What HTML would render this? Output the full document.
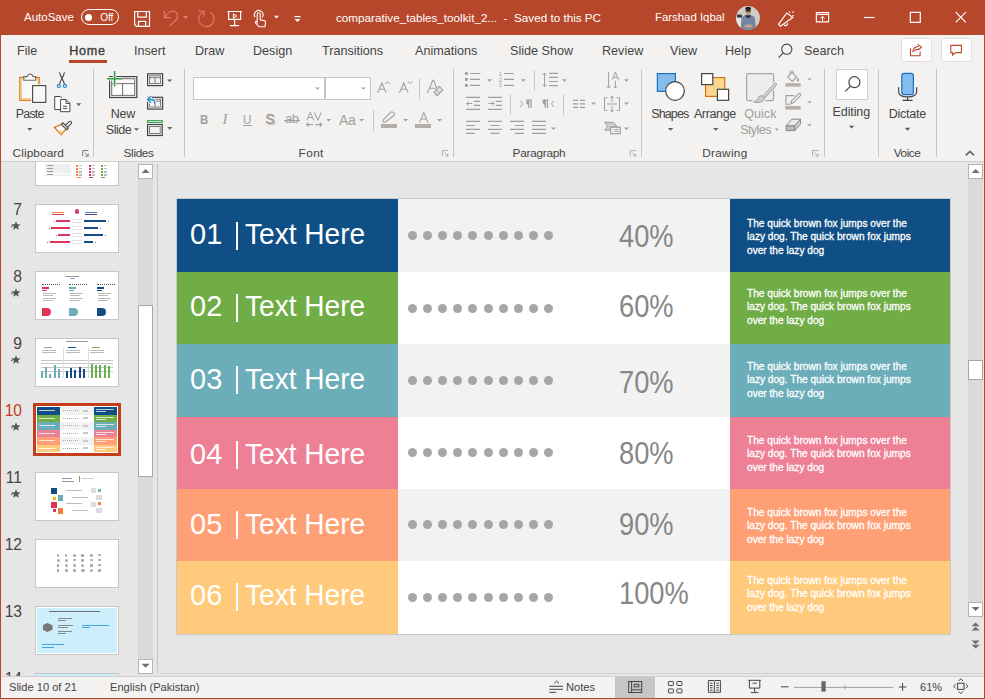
<!DOCTYPE html>
<html><head><meta charset="utf-8">
<style>
*{margin:0;padding:0;box-sizing:border-box}
html,body{width:985px;height:699px;overflow:hidden}
body{position:relative;background:#F3F2F1;font-family:"Liberation Sans",sans-serif;color:#262626}
.a{position:absolute}
.t{position:absolute;white-space:nowrap;line-height:1}
svg{position:absolute;overflow:visible}
#title{left:0;top:0;width:985px;height:35px;background:#B7472A}
.wt{color:#fff}
.tab{position:absolute;top:45px;font-size:12.6px;color:#444;line-height:1;white-space:nowrap}
.rl{position:absolute;font-size:12px;color:#444;line-height:1;white-space:nowrap}
.sep{position:absolute;width:1px;background:#C8C6C4}
.row{position:absolute;left:177px;width:773px}
.lab{position:absolute;left:0;top:0;width:221px;height:100%}
.mid{position:absolute;left:221px;top:0;width:332px;height:100%}
.desc{position:absolute;left:553px;top:0;width:220px;height:100%}
.lbl{font-size:29px;color:#fff}
.tx{transform:scaleX(0.968);transform-origin:0 0}
.pct{font-size:31px;color:#878787;transform:scaleX(0.88);transform-origin:0 0}
.dt{position:absolute;font-size:10.5px;color:#fff;line-height:13.3px;white-space:nowrap;-webkit-text-stroke:.3px #fff;transform:scaleX(0.965);transform-origin:0 0}
.dots{position:absolute;height:10px;width:150px}
.dots i{position:absolute;top:0;width:9px;height:9px;border-radius:50%;background:#A6A6A6}
.thumb{position:absolute;left:35px;width:84px;height:49px;background:#fff;border:1px solid #C8C8C8}
.tn{position:absolute;font-size:15px;color:#444;line-height:1}
.star{position:absolute;font-size:12px;color:#555;line-height:1}
</style></head><body>
<!-- TITLE BAR -->
<div id="title" class="a"></div>
<div class="t wt" style="left:24px;top:12px;font-size:11.5px">AutoSave</div>
<div class="a" style="left:81px;top:9px;width:38px;height:16px;border:1px solid #fff;border-radius:8px"></div>
<div class="a" style="left:85.4px;top:13.5px;width:7px;height:7px;border-radius:50%;background:#fff"></div>
<div class="t wt" style="left:100.2px;top:12.6px;font-size:10px">Off</div>
<div class="t wt" style="left:336px;top:12px;font-size:11.7px">comparative_tables_toolkit_2...&nbsp;&nbsp;-&nbsp;&nbsp;Saved to this PC</div>
<div class="t wt" style="left:655px;top:12px;font-size:11.4px">Farshad Iqbal</div>


<svg class="a" style="left:0;top:0" width="985" height="35" viewBox="0 0 985 35">
 <g fill="none" stroke="#fff" stroke-width="1.2">
  <!-- save -->
  <path d="M134.6 11.5h14.9v14.8h-13l-1.9-1.9z"/>
  <path d="M137.8 11.5v5.7h8.5v-5.7"/>
  <path d="M138.5 26.3v-5h7.2v5"/>
  <!-- present -->
  <path d="M227.3 11.5h14.6M228.6 11.5v7.9h12v-7.9M234.6 19.4v6.2M229.9 25.6h9.2"/>
  <path d="M233.4 13.9v4.2l3.4-2.1z" stroke-width="1"/>
  <!-- touch -->
  <path d="M257.2 22.5v-8.3a1.5 1.5 0 0 1 3 0v5.5l4 .9c1 .3 1.5 1 1.4 2l-.7 4.2h-6l-3.2-3.6c-.6-.7-.4-1.6.4-1.9z" stroke-width="1.1"/>
  <path d="M255.2 17.3a4.3 4.3 0 1 1 7 0" stroke-width="1.1"/>
  <!-- minimize/max/close -->
  <path d="M864 17.5h10.5"/>
  <path d="M910.3 12.4h10v10h-10z"/>
  <path d="M955.7 12.2l10.2 10.2M965.9 12.2l-10.2 10.2"/>
  <!-- ribbon display -->
  <path d="M816.4 12.5h12.2v9.3h-12.2zM816.4 14.3h12.2"/>
  <path d="M822.5 21.6v-5.2M820.3 18.5l2.2-2.1 2.2 2.1" stroke-width="1"/>
  <!-- megaphone -->
  <path d="M778.5 24.3l8.3-11.3 6 4.6-12.4 8.7z"/>
  <path d="M784 24.6a1.9 1.9 0 0 0 3.5-1.4"/>
  <path d="M789.6 11.2v1.7M792 13.1l1.8-1.9M792.2 15.7h1.8" stroke-width="1"/>
 </g>
 <g fill="none" stroke="#EC7560" stroke-width="1.2">
  <path d="M164.3 11.1v6.6h6.5"/>
  <path d="M165.4 16.6c2-3.6 4.8-5.4 7.6-5.4a4.7 4.7 0 0 1 4.6 5c0 1.6-.8 3-1.8 4l-6.6 6.2"/>
  <path d="M210.6 12.4a7.7 7.7 0 1 1-7.3-.6"/>
  <path d="M198 11.2h5.9v5.6"/>
 </g>
 <path d="M183 16.2h5l-2.5 2.6z" fill="#D9907E"/>
 <path d="M274 15.8h5l-2.5 2.6z" fill="#fff"/>
 <path d="M294.5 16h6v1.2h-6zM294.5 19h6l-3 3z" fill="#fff"/>
 <!-- avatar -->
 <defs><clipPath id="av"><circle cx="748" cy="18" r="11.9"/></clipPath></defs>
 <g clip-path="url(#av)">
  <rect x="735" y="5" width="26" height="26" fill="#CFCDC8"/>
  <rect x="735" y="17" width="8" height="14" fill="#E4E4E2"/>
  <rect x="737" y="14.6" width="5" height="3" fill="#3A3A3A"/>
  <path d="M740.6 31l.8-13.2c2.2-2.2 4.4-3 6.8-3s4.8.9 6.6 2.6l1.6 13.6z" fill="#7286A3"/>
  <path d="M745.2 15.3h6l-1.2 2.4h-3.6z" fill="#2E2E2E"/>
  <ellipse cx="748.2" cy="11.3" rx="2.6" ry="3.4" fill="#B58F74"/>
  <ellipse cx="748.2" cy="8.4" rx="2.9" ry="1.7" fill="#1E1E1E"/>
  <rect x="745.6" y="10.2" width="5.2" height="1.3" fill="#222"/>
  <ellipse cx="748.4" cy="26" rx="4.2" ry="1.7" fill="#BFA08A"/>
 </g>
</svg>

<!-- window border -->
<div class="a" style="left:0;top:35px;width:1px;height:664px;background:#B7472A"></div>
<div class="a" style="left:984px;top:35px;width:1px;height:664px;background:#B7472A"></div>
<div class="a" style="left:0;top:698px;width:985px;height:1px;background:#B7472A"></div>

<!-- TABS -->
<div class="tab" style="left:17px">File</div>
<div class="tab" style="left:69.3px;color:#3A3A3A;letter-spacing:.7px;-webkit-text-stroke:.35px #3A3A3A">Home</div>
<div class="a" style="left:69px;top:60px;width:38px;height:3px;background:#B7472A"></div>
<div class="tab" style="left:134px">Insert</div>
<div class="tab" style="left:195px">Draw</div>
<div class="tab" style="left:253px">Design</div>
<div class="tab" style="left:322px">Transitions</div>
<div class="tab" style="left:415px">Animations</div>
<div class="tab" style="left:510px">Slide Show</div>
<div class="tab" style="left:602px">Review</div>
<div class="tab" style="left:670px">View</div>
<div class="tab" style="left:725px">Help</div>
<div class="tab" style="left:804px">Search</div>

<!-- RIBBON -->
<!-- RIBBON LABELS -->
<div class="t" style="left:15.8px;top:107.7px;font-size:12.5px;letter-spacing:-0.84px;color:#444">Paste</div>
<div class="t" style="left:110.8px;top:108.0px;font-size:12.5px;letter-spacing:-0.21px;color:#444">New</div>
<div class="t" style="left:105.8px;top:123.5px;font-size:12.5px;letter-spacing:-0.50px;color:#444">Slide</div>
<div class="t" style="left:12.6px;top:147.5px;font-size:11.8px;letter-spacing:0.10px;color:#444">Clipboard</div>
<div class="t" style="left:123.6px;top:147.9px;font-size:11.8px;letter-spacing:-0.35px;color:#444">Slides</div>
<div class="t" style="left:298.6px;top:147.9px;font-size:11.8px;letter-spacing:0.40px;color:#444">Font</div>
<div class="t" style="left:512.5px;top:147.5px;font-size:11.8px;letter-spacing:-0.24px;color:#444">Paragraph</div>
<div class="t" style="left:702.2px;top:147.5px;font-size:11.8px;letter-spacing:0.29px;color:#444">Drawing</div>
<div class="t" style="left:893.7px;top:147.9px;font-size:11.8px;letter-spacing:-0.41px;color:#444">Voice</div>
<div class="t" style="left:651.2px;top:108.0px;font-size:12.5px;letter-spacing:-0.86px;color:#444">Shapes</div>
<div class="t" style="left:693.9px;top:108.0px;font-size:12.5px;letter-spacing:-0.36px;color:#444">Arrange</div>
<div class="t" style="left:744.2px;top:108.0px;font-size:12.5px;letter-spacing:0.06px;color:#A19F9D">Quick</div>
<div class="t" style="left:740.2px;top:123.5px;font-size:12.5px;letter-spacing:-0.57px;color:#A19F9D">Styles</div>
<div class="t" style="left:832.6px;top:106.0px;font-size:12.5px;letter-spacing:-0.12px;color:#444">Editing</div>
<div class="t" style="left:888.7px;top:108.2px;font-size:12.5px;letter-spacing:-0.22px;color:#444">Dictate</div>
<!-- font boxes -->
<div class="a" style="left:193px;top:77px;width:132px;height:23px;background:#fff;border:1px solid #C8C6C4"></div>
<div class="a" style="left:325px;top:77px;width:46px;height:23px;background:#fff;border:1px solid #C8C6C4"></div>
<!-- editing box -->
<div class="a" style="left:836px;top:69px;width:32px;height:31px;background:#fff;border:1px solid #D2D0CE"></div>
<!-- share / comment buttons -->
<div class="a" style="left:900.5px;top:38.3px;width:31px;height:23.5px;background:#fff;border:1px solid #E1DFDD;border-radius:3px"></div>
<div class="a" style="left:940.5px;top:38.3px;width:31px;height:23.5px;background:#fff;border:1px solid #E1DFDD;border-radius:3px"></div>
<svg class="a" style="left:0;top:0" width="985" height="165" viewBox="0 0 985 165">
 <!-- ===== tabs row icons ===== -->
 <g fill="none" stroke="#444" stroke-width="1.1">
  <circle cx="786.8" cy="49.2" r="5.1"/>
  <path d="M783.2 52.9l-4.6 4.7"/>
 </g>
 <g fill="none" stroke="#B7472A" stroke-width="1.1">
  <path d="M910.5 48.2v7.5h9.6v-4.3"/>
  <path d="M912.6 52.2c.6-3.6 2.8-5.8 6.2-5.8M914.2 51.3c1-1.4 2.6-2.2 4.8-2.2"/>
  <path d="M917.8 44.2l3.6 3-3 2.6"/>
  <path d="M950.8 45.4h10.6v7.2h-5.8l-3 2.4v-2.4h-1.8z"/>
 </g>
 <!-- ===== CLIPBOARD ===== -->
 <rect x="19.9" y="77.5" width="19.2" height="22.7" fill="#F5F5F5" stroke="#D9730D" stroke-width="1.3"/>
 <rect x="21.3" y="78.9" width="16.4" height="19.9" fill="#F8F8F8" stroke="#F7D08A" stroke-width="1.4"/>
 <path d="M23.8 80.2h11.8v-3.6h-2.5l-.9-1.6a2.5 2.5 0 0 0 -4.1 0l-.9 1.6h-3.4z" fill="#FAFAFA" stroke="#6A6A6A" stroke-width="1.1"/>
 <rect x="32.6" y="85.6" width="13.2" height="16.8" fill="none" stroke="#FAFAFA" stroke-width="2.6"/>
 <rect x="32.6" y="85.6" width="13.2" height="16.8" fill="#F8F8F8" stroke="#444" stroke-width="1.1"/>
 <g fill="none" stroke="#444" stroke-width="1">
  <path d="M59.5 72.3c.6 2.4 1.6 4.6 2.6 6.5s2 3.6 2.3 5.2M64.5 72.3c-.6 2.4-1.6 4.6-2.6 6.5s-2 3.6-2.3 5.2" stroke-width="1.1"/>
  <path d="M61.8 109.6h-7.1v-13.1h5.6l1.5 1.5" fill="#fff"/>
  <path d="M60.6 99.5h5.4l3.9 3.9v8.3h-9.3z" fill="#fff"/>
  <path d="M66 99.5v3.9h3.9M63 106.3h4.2M63 108.6h4.2"/>
 </g>
 <g fill="#fff" stroke="#1E8BCD" stroke-width="1.3">
  <circle cx="58.8" cy="85.9" r="1.5"/><circle cx="64.9" cy="85.9" r="1.5"/>
 </g>
 <path d="M65.2 125.7l4-4a1.3 1.3 0 0 1 1.9 1.9l-4 4z" fill="#fff" stroke="#444" stroke-width="1.1"/>
 <path d="M54.5 127.4l7.6-3.4 4.3 4.6-5.2 6z" fill="#fff" stroke="#D9730D" stroke-width="1.3"/>
 <path d="M57.6 130.6h6.4l-2.8 3.4z" fill="#FBD490"/>
 <path d="M61.4 124.4l1.5-1.5 5.3 5.3-1.5 1.5z" fill="#fff" stroke="#444" stroke-width="1.1"/>
 <g fill="#605E5C">
  <path d="M27.1 128.1h5.2l-2.6 2.7z"/>
  <path d="M76.2 103.2h5l-2.5 2.7z"/>
 </g>
 <g fill="none" stroke="#777" stroke-width="1">
  <path d="M82.7 156.2v-5.6h5.6M84.8 152.7l3.3 3.3M88.2 153.6v2.6h-2.6"/>
 </g>
 <!-- ===== SLIDES ===== -->
 <rect x="109.6" y="76.6" width="27.2" height="20.9" fill="#F4F4F4" stroke="#444" stroke-width="1.2"/>
 <rect x="111.7" y="78.7" width="23" height="16.7" fill="#FCFCFC" stroke="#707070" stroke-width="1"/>
 <path d="M111.7 83.6h23M122.6 83.6v11.8" stroke="#707070" stroke-width="1" fill="none"/>
 <path d="M114.6 71v15.2M107 78.8h15.3" stroke="#F3F2F1" stroke-width="3.4" fill="none"/>
 <path d="M114.6 71v15.2M107 78.8h15.3" stroke="#2E9E48" stroke-width="1.5" fill="none"/>
 <g fill="none" stroke="#444" stroke-width="1.2">
  <rect x="147.6" y="73.8" width="15" height="11.8"/>
  <rect x="147.6" y="97.3" width="15" height="11.8"/>
  <rect x="147.6" y="124.5" width="14.6" height="11"/>
 </g>
 <g fill="none" stroke="#707070" stroke-width="0.9">
  <rect x="149.6" y="75.8" width="11" height="7.8"/><path d="M149.6 77.7h11M155.1 77.7v5.9"/>
  <rect x="149.6" y="99.3" width="11" height="7.8"/><path d="M149.6 101.2h11M155.1 101.2v5.9"/>
  <rect x="149.6" y="126.5" width="10.6" height="7"/>
 </g>
 <path d="M148.4 99.5h2.8c2.2 0 3.6 1.6 3.6 3.6v1.2M150.8 96.3l-3.1 3.2 3.1 3.2" stroke="#F3F2F1" stroke-width="3.4" fill="none"/>
 <path d="M148.4 99.5h2.8c2.2 0 3.6 1.6 3.6 3.6v1.2M150.8 96.3l-3.1 3.2 3.1 3.2" stroke="#1E8BCD" stroke-width="1.3" fill="none"/>
 <rect x="147.5" y="120.6" width="14.8" height="1.8" fill="#E7F4EA" stroke="#2E9E48" stroke-width="1"/>
 <g fill="#605E5C">
  <path d="M134 128.2h5l-2.5 2.6z"/>
  <path d="M167.2 79.4h5l-2.5 2.6z"/>
  <path d="M167.2 127.1h5l-2.5 2.6z"/>
 </g>
 <!-- ===== FONT (disabled) ===== -->
 <g fill="#A19F9D">
  <path d="M315.2 87.4h4.6l-2.3 2.3z"/><path d="M361.1 87.4h4.6l-2.3 2.3z"/>
  <path d="M326.2 119h5l-2.5 2.4z"/><path d="M359.1 119h5l-2.5 2.4z"/>
  <path d="M403.1 119h5l-2.5 2.4z"/><path d="M437.1 119h5l-2.5 2.4z"/>
  <rect x="381" y="124" width="16" height="4" fill="#B3AFAA"/>
  <rect x="415" y="124" width="16" height="4" fill="#B3AFAA"/>
 </g>
 <g fill="none" stroke="#A19F9D" stroke-width="1.1">
  <path d="M377.6 92.9l4.3-9.9 4.3 9.9M379.3 89.2h5.2"/><path d="M385.5 84.1l2.3-2.5 2.3 2.5" stroke-width="1"/>
  <path d="M399.5 92.9l4.3-9.9 4.3 9.9M401.2 89.2h5.2"/><path d="M407.9 81.2l2.3 2.5 2.3-2.5" stroke-width="1"/>
  <path d="M427.5 92.9l5.3-12.6h.9l2.9 7.8M429.7 88.3h6.3"/>
  <path d="M434 92.3l5.3-5.9 3.5 3.5-5.8 5.8z" fill="#E4E3E2"/><path d="M436.2 89.8l3.4 3.4" stroke-width="1"/>
  <path d="M306.6 124.6h6.4M308.6 122.6l-2 2 2 2M315.4 124.6h6.4M319.8 122.6l2 2-2 2"/>
  <path d="M385.4 122.2l-2.1-.3-.1-2 7.8-7.8a1.3 1.3 0 0 1 1.9 0l1.3 1.3a1.3 1.3 0 0 1 0 1.9z"/>
  <path d="M419.6 122.6l4.2-10 4.2 10M421.1 119h5.4"/>
 </g>
 <path d="M306.8 120.3l3.5-8 3.5 8M308.1 117.5h4.4M314.5 112.3l3.4 8 3.4-8" fill="none" stroke="#A19F9D" stroke-width="1"/>
 <g fill="none" stroke="#B0AEAC" stroke-width="1">
  <path d="M442.4 156.2v-5.6h5.6M444.5 152.7l3.3 3.3M447.9 153.6v2.6h-2.6"/>
  <path d="M630.2 156.2v-5.6h5.6M632.3 152.7l3.3 3.3M635.7 153.6v2.6h-2.6"/>
  <path d="M812.6 156.2v-5.6h5.6M814.7 152.7l3.3 3.3M818.1 153.6v2.6h-2.6"/>
 </g>
 <!-- ===== PARAGRAPH (disabled) ===== -->
 <g fill="#A19F9D">
  <rect x="465" y="72.1" width="2.8" height="2.8"/><rect x="465" y="78" width="2.8" height="2.8"/><rect x="465" y="84" width="2.8" height="2.8"/>
  <path d="M487.1 79.2h4.8l-2.4 2.5z"/><path d="M520.9 79.2h4.8l-2.4 2.5z"/><path d="M562 79.2h4.8l-2.4 2.5z"/>
  <path d="M624.1 79.2h4.8l-2.4 2.5z"/><path d="M591.1 102.6h4.8l-2.4 2.5z"/><path d="M624.1 102.6h4.8l-2.4 2.5z"/>
  <path d="M551.1 127.4h4.8l-2.4 2.5z"/><path d="M624.1 127.4h4.8l-2.4 2.5z"/>
 </g>
 <g fill="none" stroke="#A19F9D" stroke-width="1.2">
  <path d="M470 73.5h10M470 79.4h10M470 85.3h10"/>
  <path d="M504 73.5h10M504 79.4h10M504 85.3h10"/>
  <path d="M549 73.3h9M549 77.4h9M549 81.5h9M549 85.6h9"/>
  <path d="M466 97.4h14M474 101.4h6M474 105.4h6M466 109.3h14"/>
  <path d="M487.8 97.4h14M495.8 101.4h6M495.8 105.4h6M487.8 109.3h14"/>
  <path d="M466 121.4h14M466 125.5h9M466 129.4h14M466 133.4h9"/>
  <path d="M488 121.4h14M490.5 125.5h9M488 129.4h14M490.5 133.4h9"/>
  <path d="M510 121.4h14M515 125.5h9M510 129.4h14M515 133.4h9"/>
  <path d="M532 121.4h14M532 125.5h14M532 129.4h14M532 133.4h14"/>
  <path d="M573 100.4h5M573 103.9h5M573 107.4h5M580 100.4h5M580 103.9h5M580 107.4h5"/>
 </g>
 <g fill="none" stroke="#A19F9D" stroke-width="1">
  <path d="M544.6 73v13.6M542.6 75l2-2 2 2M542.6 84.6l2 2 2-2"/>
  <path d="M466.6 103.5h5.6M468.6 101.5l-2 2 2 2"/>
  <path d="M488.4 103.5h5.6M492 101.5l2 2-2 2"/>
  <path d="M608.6 72v16M606.4 85.9l2.2 2.2 2.2-2.2"/>
  <path d="M612.2 79.9l3.2-7.8 3.2 7.8M613.2 77.4h4.4M615.4 80.6v7.4M613.6 86.3l1.8 1.8 1.8-1.8"/>
  <path d="M520.2 100.6l2.6 3.2-2.6 3.2"/><path d="M554 100.6l-2.6 3.2 2.6 3.2"/>
  <path d="M607.4 97.6h-2.9v12.9h2.9M616.6 97.6h2.9v12.9h-2.9"/>
  <path d="M607 104h10M612 96.2v5.8M610.3 97.9l1.7-1.7 1.7 1.7M612 106v5.8M610.3 110.1l1.7 1.7 1.7-1.7"/>
  <rect x="610.5" y="127.3" width="9.6" height="6.4" fill="#F3F2F1"/>
  <path d="M612.4 129.6h1M614.6 129.6h4M612.4 131.6h1M614.6 131.6h4"/>
 </g>
 <path d="M604.6 122.3h8.8l4.2 4.6h-7.2v3.3h-5.8l3-4z" fill="#D2D0CE" stroke="#A19F9D" stroke-width="1"/>
 <rect x="610.5" y="127.3" width="9.6" height="6.4" fill="#F3F2F1" stroke="#A19F9D" stroke-width="1"/>
 <path d="M612.4 129.6h1M614.6 129.6h4M612.4 131.6h1M614.6 131.6h4" stroke="#A19F9D" stroke-width="1"/>
 <g fill="#A19F9D">
  <path d="M528.6 100.1a2.3 2.3 0 0 0 0 4.6z"/><rect x="525.8" y="99.6" width="6" height="1.1"/><rect x="528.2" y="99.6" width="1.2" height="8.4"/><rect x="530.4" y="99.6" width="1.2" height="8.4"/>
  <path d="M545 100.1a2.3 2.3 0 0 0 0 4.6z"/><rect x="542.2" y="99.6" width="6" height="1.1"/><rect x="544.6" y="99.6" width="1.2" height="8.4"/><rect x="546.8" y="99.6" width="1.2" height="8.4"/>
 </g>
 <g font-family="Liberation Sans" font-size="5.6" fill="#A19F9D"><text x="498.8" y="75.6">1</text><text x="498.8" y="81.5">2</text><text x="498.8" y="87.4">3</text></g>
 <!-- ===== DRAWING ===== -->
 <rect x="657.4" y="73.6" width="18" height="17.8" fill="#83BEEC" stroke="#1E6FC4" stroke-width="1.2"/>
 <circle cx="675" cy="91" r="9.3" fill="#fff" stroke="#444" stroke-width="1.2"/>
 <rect x="705.6" y="77.6" width="19.2" height="18.8" fill="#FAD68E" stroke="#D9730D" stroke-width="1.2"/>
 <rect x="701.6" y="73.6" width="11.2" height="11" fill="#fff" stroke="#444" stroke-width="1.2"/>
 <rect x="717.4" y="89.3" width="11.2" height="11" fill="#fff" stroke="#444" stroke-width="1.2"/>
 <rect x="746.6" y="73.6" width="27" height="27" rx="2" fill="#EDEDED" stroke="#A8A6A4" stroke-width="1.2"/>
 <path d="M752.5 101.2h13" stroke="#F3F2F1" stroke-width="2.6" fill="none"/>
 <path d="M775.3 84.3l-10.8 12" stroke="#F3F2F1" stroke-width="5.2" fill="none" stroke-linecap="round"/>
 <path d="M775.3 84.3l-10.8 12" stroke="#A19F9D" stroke-width="3.4" fill="none" stroke-linecap="round"/>
 <path d="M775.3 84.3l-10.8 12" stroke="#E4E4E4" stroke-width="1.3" fill="none" stroke-linecap="round"/>
 <path d="M753.6 101.9c2.6-.6 4.4-2.4 5.4-5.1a3.1 3.1 0 0 1 5.4 1.8c-.6 3.6-5.4 4.8-10.8 3.3z" fill="#CFCDCB" stroke="#A19F9D" stroke-width="1"/>
 <path d="M787.6 76.8l4.4-4.5 4.7 4.7-4.4 4.5z" fill="#F3F2F1" stroke="#A19F9D" stroke-width="1.1"/>
 <path d="M789.9 74.3c-.2-2 .6-3.6 1.8-3.6 1.1 0 1.8 1 1.8 2.4" fill="none" stroke="#A19F9D" stroke-width="1"/>
 <path d="M797.8 77.6c.8 1.2 1.3 2.1 1.3 2.9a1.1 1.1 0 0 1-2.2 0c0-.8.3-1.6.9-2.9z" fill="#A19F9D"/>
 <path d="M794.2 95.6h-8.3v8.6h4" fill="none" stroke="#A19F9D" stroke-width="1.1"/>
 <path d="M790.8 103.8l.8-3.1 6.9-6.9a1.3 1.3 0 0 1 1.9 1.9l-6.9 6.9z" fill="#F3F2F1" stroke="#A19F9D" stroke-width="1.1"/>
 <rect x="785.3" y="83.2" width="15.4" height="3.4" fill="#B3AFAA"/>
 <rect x="785.3" y="106" width="15.4" height="3.6" fill="#B3AFAA"/>
 <path d="M786.1 125.9l5.6-6.7h8.8l-5.6 6.7z" fill="#EAEAEA" stroke="#8A8886" stroke-width="1"/>
 <path d="M786.1 125.9h8.8v4.7h-8.8z" fill="#BDBBB9" stroke="#8A8886" stroke-width="1"/>
 <path d="M794.9 125.9l5.6-6.7v4.7l-5.6 6.7z" fill="#D6D4D2" stroke="#8A8886" stroke-width="1"/>
 <g fill="#A19F9D">
  <path d="M807.2 78.6h4.6l-2.3 2z"/><path d="M807.2 101.3h4.6l-2.3 2z"/><path d="M807.2 124.2h4.6l-2.3 2z"/>
  <path d="M774.8 128.6h4l-2 2.1z"/>
 </g>
 <g fill="#605E5C">
  <path d="M667.8 127.9h5.5l-2.75 2.9z"/><path d="M713 127.9h5.5l-2.75 2.9z"/>
  <path d="M848.8 125.7h5.5l-2.75 2.9z"/><path d="M904.8 127.8h5.5l-2.75 2.9z"/>
 </g>
 <!-- ===== EDITING / DICTATE ===== -->
 <g fill="none" stroke="#444" stroke-width="1.2">
  <circle cx="854.4" cy="82.2" r="5.5"/><path d="M850.6 86.1l-5.4 5.3"/>
  <path d="M898.6 87.2v4.2c0 3 2.8 5.4 9 5.4s9-2.4 9-5.4v-4.2M907.6 96.8v3.4M902.6 100.4h10"/>
  <path d="M965.8 155.4l4.1-4 4.1 4" stroke="#666" stroke-width="1.8"/>
 </g>
 <rect x="901.8" y="73.4" width="11.6" height="21.2" rx="2.6" fill="#83BEEC" stroke="#1E6FC4" stroke-width="1.2"/>
</svg>
<!-- B I U S ab Aa -->
<div class="t" style="left:200px;top:112.5px;font-size:13px;font-weight:bold;color:#A19F9D;transform:scaleX(.88);transform-origin:0 0">B</div>
<div class="t" style="left:222.6px;top:111.6px;font-size:14.8px;font-style:italic;font-family:'Liberation Serif';color:#A19F9D">I</div>
<div class="t" style="left:243px;top:112.5px;font-size:13px;color:#A19F9D;transform:scaleX(.9);transform-origin:0 0">U</div>
<div class="a" style="left:243px;top:125px;width:9px;height:1px;background:#A19F9D"></div>
<div class="t" style="left:266.4px;top:113.4px;font-size:14px;color:#CFCDCB;-webkit-text-stroke:.4px #CFCDCB">S</div>
<div class="t" style="left:265.2px;top:112px;font-size:14px;color:#A19F9D;-webkit-text-stroke:.4px #A19F9D">S</div>
<div class="t" style="left:285px;top:112.3px;font-size:13px;color:#A19F9D;letter-spacing:-.5px">ab</div>
<div class="a" style="left:284px;top:119.5px;width:16px;height:1px;background:#A19F9D"></div>
<div class="t" style="left:339px;top:112.6px;font-size:14px;color:#A19F9D;letter-spacing:-.3px">Aa</div>
<div class="sep" style="left:419px;top:78px;height:21px"></div>
<div class="sep" style="left:373px;top:110px;height:21px"></div>
<div class="sep" style="left:534px;top:70px;height:21px"></div>
<div class="sep" style="left:510px;top:94px;height:21px"></div>
<div class="sep" style="left:563px;top:94px;height:21px"></div>

<!-- separators -->
<div class="sep" style="left:93px;top:69px;height:88px"></div>
<div class="sep" style="left:184px;top:69px;height:88px"></div>
<div class="sep" style="left:453px;top:69px;height:88px"></div>
<div class="sep" style="left:641px;top:69px;height:88px"></div>
<div class="sep" style="left:824px;top:69px;height:88px"></div>
<div class="sep" style="left:878px;top:69px;height:88px"></div>
<div class="sep" style="left:936px;top:69px;height:88px"></div>

<div class="a" style="left:1px;top:161px;width:983px;height:1px;background:#D2D0CE"></div>

<!-- MAIN AREAS -->
<div class="a" style="left:1px;top:162px;width:983px;height:514px;background:#E6E6E6"></div>
<div class="a" style="left:1px;top:676px;width:983px;height:1px;background:#D2D0CE"></div>

<!-- PANEL -->
<div class="a" style="left:0;top:162px;width:985px;height:514px;overflow:hidden"><div class="a" style="left:0;top:-162px;width:985px;height:699px"><div class="a" style="left:138px;top:164px;width:15px;height:510px;background:#DADADA"></div>
<div class="a" style="left:138px;top:164px;width:15px;height:15px;background:#fff;border:1px solid #B4B4B4"></div>
<div class="a" style="left:138px;top:305px;width:15px;height:172px;background:#fff;border:1px solid #A8A8A8"></div>
<div class="a" style="left:138px;top:659px;width:15px;height:15px;background:#fff;border:1px solid #B4B4B4"></div>
<div class="a" style="left:157px;top:164px;width:1px;height:510px;background:#C8C6C4"></div>
<div class="a" style="left:968px;top:164px;width:15px;height:438px;background:#DADADA"></div>
<div class="a" style="left:968px;top:164px;width:15px;height:15px;background:#fff;border:1px solid #B4B4B4"></div>
<div class="a" style="left:968px;top:360px;width:15px;height:20px;background:#fff;border:1px solid #A6A6A6"></div>
<div class="a" style="left:968px;top:602px;width:15px;height:15px;background:#fff;border:1px solid #B4B4B4"></div>
<div class="a" style="left:160px;top:673px;width:824px;height:1px;background:#D0D0D0"></div>
<div class="a" style="left:35px;top:137px;width:84px;height:49px;background:#fff;border:1px solid #C6C6C6"></div>
<div class="a" style="left:35px;top:204px;width:84px;height:49px;background:#fff;border:1px solid #C6C6C6"></div>
<div class="t" style="right:963px;top:202px;font-size:15.6px;color:#444">7</div>
<div class="a" style="left:0;top:0"><svg class="a" style="left:0;top:0" width="40" height="244"><path d="M16 221.2l1.25 3.1 3.35.2-2.6 2.1.85 3.25L16 228.1l-2.85 1.75.85-3.25-2.6-2.1 3.35-.2z" fill="#555"/><path d="M11 226.6h1.6M11.6 225h1" stroke="#555" stroke-width="1"/></svg></div>
<div class="a" style="left:35px;top:271px;width:84px;height:49px;background:#fff;border:1px solid #C6C6C6"></div>
<div class="t" style="right:963px;top:269px;font-size:15.6px;color:#444">8</div>
<div class="a" style="left:0;top:0"><svg class="a" style="left:0;top:0" width="40" height="311"><path d="M16 288.2l1.25 3.1 3.35.2-2.6 2.1.85 3.25L16 295.1l-2.85 1.75.85-3.25-2.6-2.1 3.35-.2z" fill="#555"/><path d="M11 293.6h1.6M11.6 292h1" stroke="#555" stroke-width="1"/></svg></div>
<div class="a" style="left:35px;top:338px;width:84px;height:49px;background:#fff;border:1px solid #C6C6C6"></div>
<div class="t" style="right:963px;top:336px;font-size:15.6px;color:#444">9</div>
<div class="a" style="left:0;top:0"><svg class="a" style="left:0;top:0" width="40" height="378"><path d="M16 355.2l1.25 3.1 3.35.2-2.6 2.1.85 3.25L16 362.1l-2.85 1.75.85-3.25-2.6-2.1 3.35-.2z" fill="#555"/><path d="M11 360.6h1.6M11.6 359h1" stroke="#555" stroke-width="1"/></svg></div>
<div class="a" style="left:35px;top:472px;width:84px;height:49px;background:#fff;border:1px solid #C6C6C6"></div>
<div class="t" style="right:963px;top:470px;font-size:15.6px;color:#444">11</div>
<div class="a" style="left:0;top:0"><svg class="a" style="left:0;top:0" width="40" height="512"><path d="M16 489.2l1.25 3.1 3.35.2-2.6 2.1.85 3.25L16 496.1l-2.85 1.75.85-3.25-2.6-2.1 3.35-.2z" fill="#555"/><path d="M11 494.6h1.6M11.6 493h1" stroke="#555" stroke-width="1"/></svg></div>
<div class="a" style="left:35px;top:539px;width:84px;height:49px;background:#fff;border:1px solid #C6C6C6"></div>
<div class="t" style="right:963px;top:537px;font-size:15.6px;color:#444">12</div>
<div class="a" style="left:35px;top:606px;width:84px;height:49px;background:#CDEFFB;border:1px solid #C6C6C6"></div>
<div class="t" style="right:963px;top:604px;font-size:15.6px;color:#444">13</div>
<div class="a" style="left:35px;top:673px;width:84px;height:49px;background:#CDEFFB;border:1px solid #C6C6C6"></div>
<div class="t" style="right:963px;top:671px;font-size:15.6px;color:#444">14</div>
<div class="a" style="left:33px;top:403px;width:88px;height:53px;border:3px solid #C43E1C;background:#fff"></div>
<div class="t" style="right:963px;top:403px;font-size:15.6px;color:#C43E1C">10</div>
<div class="a" style="left:0;top:0"><svg class="a" style="left:0;top:0" width="40" height="460"><path d="M16 422.2l1.25 3.1 3.35.2-2.6 2.1.85 3.25L16 429.1l-2.85 1.75.85-3.25-2.6-2.1 3.35-.2z" fill="#555"/><path d="M11 427.6h1.6M11.6 426h1" stroke="#555" stroke-width="1"/></svg></div>
<div class="a" style="left:37px;top:407.00px;width:23px;height:7.80px;background:#104F85"></div>
<div class="a" style="left:60px;top:407.00px;width:34px;height:7.80px;background:#F2F2F2"></div>
<div class="a" style="left:94px;top:407.00px;width:23px;height:7.80px;background:#104F85"></div>
<div class="a" style="left:39px;top:410.00px;width:16px;height:1.2px;background:rgba(255,255,255,.75)"></div>
<div class="a" style="left:63px;top:410.20px;width:15px;height:1px;border-top:1px dotted #AAA"></div>
<div class="a" style="left:83px;top:409.60px;width:5px;height:2px;background:#C8C8C8"></div>
<div class="a" style="left:96px;top:409.20px;width:18px;height:1px;background:rgba(255,255,255,.7)"></div>
<div class="a" style="left:96px;top:411.40px;width:10px;height:1px;background:rgba(255,255,255,.7)"></div>
<div class="a" style="left:37px;top:414.50px;width:23px;height:7.80px;background:#70AD47"></div>
<div class="a" style="left:60px;top:414.50px;width:34px;height:7.80px;background:#fff"></div>
<div class="a" style="left:94px;top:414.50px;width:23px;height:7.80px;background:#70AD47"></div>
<div class="a" style="left:39px;top:417.50px;width:16px;height:1.2px;background:rgba(255,255,255,.75)"></div>
<div class="a" style="left:63px;top:417.70px;width:15px;height:1px;border-top:1px dotted #AAA"></div>
<div class="a" style="left:83px;top:417.10px;width:5px;height:2px;background:#C8C8C8"></div>
<div class="a" style="left:96px;top:416.70px;width:18px;height:1px;background:rgba(255,255,255,.7)"></div>
<div class="a" style="left:96px;top:418.90px;width:10px;height:1px;background:rgba(255,255,255,.7)"></div>
<div class="a" style="left:37px;top:422.00px;width:23px;height:7.80px;background:#6BADB9"></div>
<div class="a" style="left:60px;top:422.00px;width:34px;height:7.80px;background:#F2F2F2"></div>
<div class="a" style="left:94px;top:422.00px;width:23px;height:7.80px;background:#6BADB9"></div>
<div class="a" style="left:39px;top:425.00px;width:16px;height:1.2px;background:rgba(255,255,255,.75)"></div>
<div class="a" style="left:63px;top:425.20px;width:15px;height:1px;border-top:1px dotted #AAA"></div>
<div class="a" style="left:83px;top:424.60px;width:5px;height:2px;background:#C8C8C8"></div>
<div class="a" style="left:96px;top:424.20px;width:18px;height:1px;background:rgba(255,255,255,.7)"></div>
<div class="a" style="left:96px;top:426.40px;width:10px;height:1px;background:rgba(255,255,255,.7)"></div>
<div class="a" style="left:37px;top:429.50px;width:23px;height:7.80px;background:#EE8096"></div>
<div class="a" style="left:60px;top:429.50px;width:34px;height:7.80px;background:#fff"></div>
<div class="a" style="left:94px;top:429.50px;width:23px;height:7.80px;background:#EE8096"></div>
<div class="a" style="left:39px;top:432.50px;width:16px;height:1.2px;background:rgba(255,255,255,.75)"></div>
<div class="a" style="left:63px;top:432.70px;width:15px;height:1px;border-top:1px dotted #AAA"></div>
<div class="a" style="left:83px;top:432.10px;width:5px;height:2px;background:#C8C8C8"></div>
<div class="a" style="left:96px;top:431.70px;width:18px;height:1px;background:rgba(255,255,255,.7)"></div>
<div class="a" style="left:96px;top:433.90px;width:10px;height:1px;background:rgba(255,255,255,.7)"></div>
<div class="a" style="left:37px;top:437.00px;width:23px;height:7.80px;background:#FF9F76"></div>
<div class="a" style="left:60px;top:437.00px;width:34px;height:7.80px;background:#F2F2F2"></div>
<div class="a" style="left:94px;top:437.00px;width:23px;height:7.80px;background:#FF9F76"></div>
<div class="a" style="left:39px;top:440.00px;width:16px;height:1.2px;background:rgba(255,255,255,.75)"></div>
<div class="a" style="left:63px;top:440.20px;width:15px;height:1px;border-top:1px dotted #AAA"></div>
<div class="a" style="left:83px;top:439.60px;width:5px;height:2px;background:#C8C8C8"></div>
<div class="a" style="left:96px;top:439.20px;width:18px;height:1px;background:rgba(255,255,255,.7)"></div>
<div class="a" style="left:96px;top:441.40px;width:10px;height:1px;background:rgba(255,255,255,.7)"></div>
<div class="a" style="left:37px;top:444.50px;width:23px;height:7.80px;background:#FFCA7B"></div>
<div class="a" style="left:60px;top:444.50px;width:34px;height:7.80px;background:#fff"></div>
<div class="a" style="left:94px;top:444.50px;width:23px;height:7.80px;background:#FFCA7B"></div>
<div class="a" style="left:39px;top:447.50px;width:16px;height:1.2px;background:rgba(255,255,255,.75)"></div>
<div class="a" style="left:63px;top:447.70px;width:15px;height:1px;border-top:1px dotted #AAA"></div>
<div class="a" style="left:83px;top:447.10px;width:5px;height:2px;background:#C8C8C8"></div>
<div class="a" style="left:96px;top:446.70px;width:18px;height:1px;background:rgba(255,255,255,.7)"></div>
<div class="a" style="left:96px;top:448.90px;width:10px;height:1px;background:rgba(255,255,255,.7)"></div>
<div class="a" style="left:45px;top:164.0px;width:26px;height:2.6px;background:#EFEFEF"></div>
<div class="a" style="left:47px;top:164.8px;width:6px;height:1px;background:#999"></div>
<div class="a" style="left:76px;top:164.5px;width:2px;height:2px;background:#F47B3B"></div>
<div class="a" style="left:79px;top:164.6px;width:3px;height:1.5px;background:#BBB"></div>
<div class="a" style="left:89px;top:164.5px;width:2px;height:2px;background:#E0335A"></div>
<div class="a" style="left:92px;top:164.6px;width:3px;height:1.5px;background:#BBB"></div>
<div class="a" style="left:101px;top:164.5px;width:2px;height:2px;background:#6AB04C"></div>
<div class="a" style="left:104px;top:164.6px;width:3px;height:1.5px;background:#BBB"></div>
<div class="a" style="left:45px;top:167.2px;width:26px;height:2.6px;background:#EFEFEF"></div>
<div class="a" style="left:47px;top:168.0px;width:6px;height:1px;background:#999"></div>
<div class="a" style="left:76px;top:167.7px;width:2px;height:2px;background:#F47B3B"></div>
<div class="a" style="left:79px;top:167.8px;width:3px;height:1.5px;background:#BBB"></div>
<div class="a" style="left:89px;top:167.7px;width:2px;height:2px;background:#E0335A"></div>
<div class="a" style="left:92px;top:167.8px;width:3px;height:1.5px;background:#BBB"></div>
<div class="a" style="left:101px;top:167.7px;width:2px;height:2px;background:#6AB04C"></div>
<div class="a" style="left:104px;top:167.8px;width:3px;height:1.5px;background:#BBB"></div>
<div class="a" style="left:45px;top:170.4px;width:26px;height:2.6px;background:#EFEFEF"></div>
<div class="a" style="left:47px;top:171.2px;width:6px;height:1px;background:#999"></div>
<div class="a" style="left:76px;top:170.9px;width:2px;height:2px;background:#F47B3B"></div>
<div class="a" style="left:79px;top:171.0px;width:3px;height:1.5px;background:#BBB"></div>
<div class="a" style="left:89px;top:170.9px;width:2px;height:2px;background:#E0335A"></div>
<div class="a" style="left:92px;top:171.0px;width:3px;height:1.5px;background:#BBB"></div>
<div class="a" style="left:101px;top:170.9px;width:2px;height:2px;background:#6AB04C"></div>
<div class="a" style="left:104px;top:171.0px;width:3px;height:1.5px;background:#BBB"></div>
<div class="a" style="left:45px;top:173.6px;width:26px;height:2.6px;background:#EFEFEF"></div>
<div class="a" style="left:47px;top:174.4px;width:6px;height:1px;background:#999"></div>
<div class="a" style="left:76px;top:174.1px;width:2px;height:2px;background:#F47B3B"></div>
<div class="a" style="left:79px;top:174.2px;width:3px;height:1.5px;background:#BBB"></div>
<div class="a" style="left:89px;top:174.1px;width:2px;height:2px;background:#E0335A"></div>
<div class="a" style="left:92px;top:174.2px;width:3px;height:1.5px;background:#BBB"></div>
<div class="a" style="left:101px;top:174.1px;width:2px;height:2px;background:#6AB04C"></div>
<div class="a" style="left:104px;top:174.2px;width:3px;height:1.5px;background:#BBB"></div>
<div class="a" style="left:77px;top:177px;width:4px;height:1.2px;background:#F47B3B"></div>
<div class="a" style="left:89px;top:177px;width:4px;height:1.2px;background:#E0335A"></div>
<div class="a" style="left:101px;top:177px;width:4px;height:1.2px;background:#6AB04C"></div>
<div class="a" style="left:52px;top:212px;width:12px;height:1px;background:#F47B3B"></div>
<div class="a" style="left:52px;top:213.5px;width:12px;height:.8px;background:#C43E5C"></div>
<div class="a" style="left:74.5px;top:209px;width:4.5px;height:4.5px;border-radius:50%;background:#E0335A"></div>
<div class="a" style="left:85px;top:212px;width:12px;height:1px;background:#4F74B8"></div>
<div class="a" style="left:85px;top:213.5px;width:12px;height:.8px;background:#5A3E8C"></div>
<div class="a" style="left:56.0px;top:220.2px;width:13.7px;height:2.2px;background:#E0335A"></div>
<div class="a" style="left:84.2px;top:220.2px;width:21.8px;height:2.2px;background:#124C86"></div>
<div class="a" style="left:72px;top:219.0px;width:10px;height:3.6px;border-top:.6px solid #E2E2E2;border-bottom:.6px solid #E2E2E2"></div>
<div class="a" style="left:53.8px;top:220.6px;width:1.2px;height:1.4px;background:#777"></div>
<div class="a" style="left:108.3px;top:220.6px;width:1.2px;height:1.4px;background:#777"></div>
<div class="a" style="left:50.9px;top:227.2px;width:18.8px;height:2.2px;background:#E0335A"></div>
<div class="a" style="left:84.2px;top:227.2px;width:13.8px;height:2.2px;background:#124C86"></div>
<div class="a" style="left:72px;top:226.0px;width:10px;height:3.6px;border-top:.6px solid #E2E2E2;border-bottom:.6px solid #E2E2E2"></div>
<div class="a" style="left:48.7px;top:227.6px;width:1.2px;height:1.4px;background:#777"></div>
<div class="a" style="left:100.3px;top:227.6px;width:1.2px;height:1.4px;background:#777"></div>
<div class="a" style="left:58.0px;top:234.2px;width:11.7px;height:2.2px;background:#E0335A"></div>
<div class="a" style="left:84.2px;top:234.2px;width:18.5px;height:2.2px;background:#124C86"></div>
<div class="a" style="left:72px;top:233.0px;width:10px;height:3.6px;border-top:.6px solid #E2E2E2;border-bottom:.6px solid #E2E2E2"></div>
<div class="a" style="left:55.8px;top:234.6px;width:1.2px;height:1.4px;background:#777"></div>
<div class="a" style="left:105.0px;top:234.6px;width:1.2px;height:1.4px;background:#777"></div>
<div class="a" style="left:49.5px;top:241.2px;width:20.2px;height:2.2px;background:#E0335A"></div>
<div class="a" style="left:84.2px;top:241.2px;width:8.8px;height:2.2px;background:#124C86"></div>
<div class="a" style="left:72px;top:240.0px;width:10px;height:3.6px;border-top:.6px solid #E2E2E2;border-bottom:.6px solid #E2E2E2"></div>
<div class="a" style="left:47.3px;top:241.6px;width:1.2px;height:1.4px;background:#777"></div>
<div class="a" style="left:95.3px;top:241.6px;width:1.2px;height:1.4px;background:#777"></div>
<div class="a" style="left:65px;top:276px;width:14px;height:1px;background:#999"></div>
<div class="a" style="left:70px;top:278.3px;width:5px;height:.8px;background:#7DB0DA"></div>
<div class="a" style="left:42px;top:283.5px;width:18px;height:1.2px;border-bottom:1px dotted #555"></div>
<div class="a" style="left:42px;top:287px;width:7px;height:1.6px;background:#E0335A"></div>
<div class="a" style="left:42px;top:290px;width:5px;height:.8px;background:#E0335A"></div>
<div class="a" style="left:43px;top:292.5px;width:13px;height:.8px;background:#BBB"></div>
<div class="a" style="left:43px;top:295.0px;width:10px;height:.8px;background:#BBB"></div>
<div class="a" style="left:43px;top:297.5px;width:13px;height:.8px;background:#BBB"></div>
<div class="a" style="left:43px;top:300.0px;width:10px;height:.8px;background:#BBB"></div>
<div class="a" style="left:42px;top:307.5px;width:9px;height:8.5px;border-radius:0 5px 5px 0;background:#E0335A"></div>
<div class="a" style="left:69px;top:283.5px;width:18px;height:1.2px;border-bottom:1px dotted #555"></div>
<div class="a" style="left:69px;top:287px;width:7px;height:1.6px;background:#6BADB9"></div>
<div class="a" style="left:69px;top:290px;width:5px;height:.8px;background:#6BADB9"></div>
<div class="a" style="left:70px;top:292.5px;width:13px;height:.8px;background:#BBB"></div>
<div class="a" style="left:70px;top:295.0px;width:10px;height:.8px;background:#BBB"></div>
<div class="a" style="left:70px;top:297.5px;width:13px;height:.8px;background:#BBB"></div>
<div class="a" style="left:70px;top:300.0px;width:10px;height:.8px;background:#BBB"></div>
<div class="a" style="left:69px;top:307.5px;width:9px;height:8.5px;border-radius:0 5px 5px 0;background:#6BADB9"></div>
<div class="a" style="left:97px;top:283.5px;width:18px;height:1.2px;border-bottom:1px dotted #555"></div>
<div class="a" style="left:97px;top:287px;width:7px;height:1.6px;background:#124C86"></div>
<div class="a" style="left:97px;top:290px;width:5px;height:.8px;background:#124C86"></div>
<div class="a" style="left:98px;top:292.5px;width:13px;height:.8px;background:#BBB"></div>
<div class="a" style="left:98px;top:295.0px;width:10px;height:.8px;background:#BBB"></div>
<div class="a" style="left:98px;top:297.5px;width:13px;height:.8px;background:#BBB"></div>
<div class="a" style="left:98px;top:300.0px;width:10px;height:.8px;background:#BBB"></div>
<div class="a" style="left:97px;top:307.5px;width:9px;height:8.5px;border-radius:0 5px 5px 0;background:#124C86"></div>
<div class="a" style="left:66px;top:341px;width:22px;height:1px;background:#999"></div>
<div class="a" style="left:44px;top:347px;width:8px;height:1px;background:#6BADB9"></div>
<div class="a" style="left:42px;top:350px;width:14px;height:.8px;background:#BBB"></div>
<div class="a" style="left:42px;top:352px;width:14px;height:.8px;background:#BBB"></div>
<div class="a" style="left:68px;top:347px;width:8px;height:1px;background:#124C86"></div>
<div class="a" style="left:66px;top:350px;width:14px;height:.8px;background:#BBB"></div>
<div class="a" style="left:66px;top:352px;width:14px;height:.8px;background:#BBB"></div>
<div class="a" style="left:92px;top:347px;width:8px;height:1px;background:#6AB04C"></div>
<div class="a" style="left:90px;top:350px;width:14px;height:.8px;background:#BBB"></div>
<div class="a" style="left:90px;top:352px;width:14px;height:.8px;background:#BBB"></div>
<div class="a" style="left:41px;top:359.5px;width:72px;height:.8px;background:#C8C8C8"></div>
<div class="a" style="left:41px;top:363.4px;width:72px;height:.8px;background:#C8C8C8"></div>
<div class="a" style="left:41px;top:367.3px;width:72px;height:.8px;background:#C8C8C8"></div>
<div class="a" style="left:41px;top:371px;width:72px;height:.8px;background:#C8C8C8"></div>
<div class="a" style="left:41.0px;top:370.5px;width:2px;height:7px;background:#6BADB9"></div>
<div class="a" style="left:45.2px;top:366.5px;width:2px;height:11px;background:#6BADB9"></div>
<div class="a" style="left:49.4px;top:373.5px;width:2px;height:4px;background:#6BADB9"></div>
<div class="a" style="left:53.6px;top:364.5px;width:2px;height:13px;background:#6BADB9"></div>
<div class="a" style="left:57.8px;top:368.5px;width:2px;height:9px;background:#6BADB9"></div>
<div class="a" style="left:66.0px;top:370.5px;width:2px;height:7px;background:#124C86"></div>
<div class="a" style="left:70.2px;top:367.5px;width:2px;height:10px;background:#124C86"></div>
<div class="a" style="left:74.4px;top:369.5px;width:2px;height:8px;background:#124C86"></div>
<div class="a" style="left:78.6px;top:366.5px;width:2px;height:11px;background:#124C86"></div>
<div class="a" style="left:82.8px;top:368.5px;width:2px;height:9px;background:#124C86"></div>
<div class="a" style="left:91.0px;top:363.5px;width:2px;height:14px;background:#6AB04C"></div>
<div class="a" style="left:95.2px;top:364.5px;width:2px;height:13px;background:#6AB04C"></div>
<div class="a" style="left:99.4px;top:364.5px;width:2px;height:13px;background:#6AB04C"></div>
<div class="a" style="left:103.6px;top:364.5px;width:2px;height:13px;background:#6AB04C"></div>
<div class="a" style="left:107.8px;top:365.5px;width:2px;height:12px;background:#6AB04C"></div>
<div class="a" style="left:63px;top:348px;width:.8px;height:30px;background:#DDD"></div>
<div class="a" style="left:88px;top:348px;width:.8px;height:30px;background:#DDD"></div>
<div class="a" style="left:62px;top:477.5px;width:10px;height:1px;background:#999"></div>
<div class="a" style="left:62px;top:480.5px;width:12px;height:1px;background:#999"></div>
<div class="a" style="left:78.5px;top:476px;width:.9px;height:6px;background:#6AB04C"></div>
<div class="a" style="left:81px;top:477.5px;width:13px;height:1px;background:#CCC"></div>
<div class="a" style="left:51px;top:488px;width:6px;height:6px;background:#124C86"></div>
<div class="a" style="left:57.7px;top:495px;width:5px;height:6px;background:#6BADB9"></div>
<div class="a" style="left:51px;top:501.5px;width:6px;height:6px;background:#E0335A"></div>
<div class="a" style="left:57.7px;top:508px;width:5px;height:5.5px;background:#F47B3B"></div>
<div class="a" style="left:52.5px;top:497px;width:3.5px;height:2.5px;background:#F5B400"></div>
<div class="a" style="left:52.5px;top:509px;width:3.5px;height:3px;background:#E0335A"></div>
<div class="a" style="left:90.5px;top:488px;width:5.5px;height:5px;background:#DDDDDD"></div>
<div class="a" style="left:96.2px;top:495px;width:5.5px;height:5px;background:#DDDDDD"></div>
<div class="a" style="left:90.5px;top:501.5px;width:5.5px;height:5px;background:#DDDDDD"></div>
<div class="a" style="left:96.2px;top:508px;width:5.5px;height:5px;background:#DDDDDD"></div>
<div class="a" style="left:97.5px;top:489px;width:3px;height:3px;background:#5BC0A8"></div>
<div class="a" style="left:97.5px;top:502px;width:3px;height:3px;background:#F47B3B"></div>
<div class="a" style="left:66px;top:490.0px;width:16px;height:.8px;background:#BBB"></div>
<div class="a" style="left:72px;top:496.5px;width:16px;height:.8px;background:#BBB"></div>
<div class="a" style="left:66px;top:503.0px;width:16px;height:.8px;background:#BBB"></div>
<div class="a" style="left:72px;top:509.5px;width:16px;height:.8px;background:#BBB"></div>
<div class="a" style="left:56.5px;top:554.0px;width:2.6px;height:3.4px;background:#666;opacity:.55;border-radius:1.5px"></div>
<div class="a" style="left:64.8px;top:554.0px;width:2.6px;height:3px;background:#666;opacity:.55;border-radius:1.5px"></div>
<div class="a" style="left:73.1px;top:554.0px;width:3px;height:3.4px;background:#666;opacity:.55;border-radius:1.5px"></div>
<div class="a" style="left:81.4px;top:554.0px;width:2.6px;height:3.4px;background:#666;opacity:.55;border-radius:0px"></div>
<div class="a" style="left:89.7px;top:554.0px;width:3px;height:3px;background:#666;opacity:.55;border-radius:1.5px"></div>
<div class="a" style="left:98.0px;top:554.0px;width:2.6px;height:2.4px;background:#666;opacity:.55;border-radius:1.5px"></div>
<div class="a" style="left:56.5px;top:559.0px;width:3px;height:3.4px;background:#666;opacity:.55;border-radius:1.5px"></div>
<div class="a" style="left:64.8px;top:559.0px;width:3px;height:3px;background:#666;opacity:.55;border-radius:1.5px"></div>
<div class="a" style="left:73.1px;top:559.0px;width:2.6px;height:2.4px;background:#666;opacity:.55;border-radius:1.5px"></div>
<div class="a" style="left:81.4px;top:559.0px;width:2.6px;height:3.4px;background:#666;opacity:.55;border-radius:1px"></div>
<div class="a" style="left:89.7px;top:559.0px;width:3.2px;height:2.4px;background:#666;opacity:.55;border-radius:1.5px"></div>
<div class="a" style="left:98.0px;top:559.0px;width:2.6px;height:2.4px;background:#666;opacity:.55;border-radius:1.5px"></div>
<div class="a" style="left:56.5px;top:564.0px;width:2.6px;height:3px;background:#666;opacity:.55;border-radius:0px"></div>
<div class="a" style="left:64.8px;top:564.0px;width:3px;height:3px;background:#666;opacity:.55;border-radius:1.5px"></div>
<div class="a" style="left:73.1px;top:564.0px;width:3.2px;height:3px;background:#666;opacity:.55;border-radius:1.5px"></div>
<div class="a" style="left:81.4px;top:564.0px;width:3px;height:3px;background:#666;opacity:.55;border-radius:1.5px"></div>
<div class="a" style="left:89.7px;top:564.0px;width:3.2px;height:3px;background:#666;opacity:.55;border-radius:0px"></div>
<div class="a" style="left:98.0px;top:564.0px;width:3px;height:2.4px;background:#666;opacity:.55;border-radius:0px"></div>
<div class="a" style="left:56.5px;top:569.0px;width:2.6px;height:3px;background:#666;opacity:.55;border-radius:0px"></div>
<div class="a" style="left:64.8px;top:569.0px;width:3px;height:3.4px;background:#666;opacity:.55;border-radius:1px"></div>
<div class="a" style="left:73.1px;top:569.0px;width:3.2px;height:3px;background:#666;opacity:.55;border-radius:1px"></div>
<div class="a" style="left:81.4px;top:569.0px;width:3.2px;height:3px;background:#666;opacity:.55;border-radius:1.5px"></div>
<div class="a" style="left:89.7px;top:569.0px;width:3px;height:3.4px;background:#666;opacity:.55;border-radius:1.5px"></div>
<div class="a" style="left:98.0px;top:569.0px;width:3px;height:3.4px;background:#666;opacity:.55;border-radius:0px"></div>
<div class="a" style="left:36px;top:607px;width:82px;height:47px;border:1.5px solid #fff"></div>
<div class="a" style="left:673px;top:0"></div>
<div class="a" style="left:49px;top:611px;width:51px;height:1.4px;background:#444;opacity:.75"></div>
<div class="a" style="left:42.5px;top:623px;width:10px;height:9px;background:#777;clip-path:polygon(50% 0,100% 25%,100% 75%,50% 100%,0 75%,0 25%)"></div>
<div class="a" style="left:58px;top:618px;width:14px;height:.8px;background:#888"></div>
<div class="a" style="left:58px;top:620px;width:8px;height:.8px;background:#888"></div>
<div class="a" style="left:58px;top:624.5px;width:15px;height:.8px;background:#888"></div>
<div class="a" style="left:58px;top:626.5px;width:10px;height:.8px;background:#888"></div>
<div class="a" style="left:58px;top:631px;width:14px;height:.8px;background:#888"></div>
<div class="a" style="left:58px;top:633px;width:8px;height:.8px;background:#888"></div>
<div class="a" style="left:82px;top:624.5px;width:27px;height:.9px;background:#3DA8E0"></div>
<div class="a" style="left:82px;top:626.8px;width:8px;height:.9px;background:#3DA8E0"></div>
<div class="a" style="left:42px;top:644px;width:22px;height:.9px;background:#3DA8E0"></div>
<div class="a" style="left:42px;top:646.5px;width:12px;height:.9px;background:#3DA8E0"></div>
<svg class="a" style="left:0;top:0" width="985" height="699" viewBox="0 0 985 699">
<g fill="#6E6E6E">
<path d="M141.6 172.9h8l-4-4z"/>
<path d="M141.6 663.8h8l-4 4z"/>
<path d="M971.6 172.9h8l-4-4z"/>
<path d="M971.6 607h8l-4 4z"/>
<path d="M971.6 626.2h8l-4-3.8z M971.6 630.6h8l-4-3.8z"/>
<path d="M971.6 640.4h8l-4 3.8z M971.6 644.8h8l-4 3.8z"/>
</g>
</svg></div></div>
<!-- STATUS -->
<div class="t" style="left:9px;top:682px;font-size:11.1px;color:#444">Slide 10 of 21</div>
<div class="t" style="left:110px;top:682px;font-size:11.1px;color:#444">English (Pakistan)</div>
<div class="t" style="left:920px;top:682px;font-size:11.1px;color:#444">61%</div>

<div class="a" style="left:615px;top:677px;width:40px;height:21px;background:#C8C6C4"></div>
<div class="t" style="left:566px;top:682px;font-size:11.1px;color:#444">Notes</div>
<svg class="a" style="left:0;top:0" width="985" height="699" viewBox="0 0 985 699">
 <g fill="none" stroke="#444" stroke-width="1">
  <path d="M549.3 686.3h13.7M549.3 689.3h13.7M549.3 692.3h6.7M554.2 683.3l2.4-2.2 2.4 2.2"/>
  <rect x="628.7" y="681.5" width="13" height="11"/>
  <path d="M631.6 681.5v11M631.6 689.8h10.1"/>
  <rect x="634.2" y="684.2" width="4.6" height="2.6"/>
  <rect x="668.4" y="681.5" width="5" height="4" rx=".6"/><rect x="676.9" y="681.5" width="5" height="4" rx=".6"/>
  <rect x="668.4" y="688.9" width="5" height="4" rx=".6"/><rect x="676.9" y="688.9" width="5" height="4" rx=".6"/>
  <path d="M708.4 680.5h5.5l.5.8.5-.8h5.5v11.8h-5.5l-.5.6-.5-.6h-5.5z"/>
  <path d="M714.4 681.3v11M710 683.2h2.6M710 685.5h2.6M710 687.8h2.6M710 690.1h2.6M716.3 683.2h2.6M716.3 685.5h2.6M716.3 687.8h2.6M716.3 690.1h2.6"/>
  <path d="M748.3 680.3h12.6M749.4 680.3v7.8h10.4v-7.8M754.6 688.1v4.4M750.8 692.6h7.6M752.6 683.2h4.2"/>
  <path d="M781 686.8h7.6M898.8 687h7.6M902.6 683v7.8"/>
  <path d="M953.6 686.2l2.2-2.2M953.6 686.2l2.2 2.2M968 686.2l-2.2-2.2M968 686.2l-2.2 2.2M958.6 681l2.2-2.2 2.2 2.2M958.6 691.4l2.2 2.2 2.2-2.2"/>
  <rect x="957.6" y="683.2" width="6.4" height="6.2"/>
 </g>
 <path d="M794 687.4h99.3" stroke="#A19F9D" stroke-width="1"/>
 <path d="M844.8 685.4v4" stroke="#A19F9D" stroke-width="1"/>
 <rect x="821.4" y="681.3" width="4.3" height="10.3" fill="#666"/>
</svg>

<!-- SLIDE -->
<div class="a" style="left:176px;top:198px;width:775px;height:437px;background:#C8C8C8"></div>
<div class="a" style="left:177px;top:199px;width:221px;height:73px;background:#104F85"></div>
<div class="a" style="left:398px;top:199px;width:332px;height:73px;background:#F2F2F2"></div>
<div class="a" style="left:730px;top:199px;width:220px;height:73px;background:#104F85"></div>
<div class="t lbl" style="left:190px;top:220px">01</div>
<div class="a" style="left:235.8px;top:222px;width:2.6px;height:28px;background:#fff"></div>
<div class="t lbl tx" style="left:244.7px;top:220px">Text Here</div>
<div class="dots" style="left:408px;top:231px"><i style="left:0.00px"></i><i style="left:15.11px"></i><i style="left:30.22px"></i><i style="left:45.33px"></i><i style="left:60.44px"></i><i style="left:75.55px"></i><i style="left:90.66px"></i><i style="left:105.77px"></i><i style="left:120.88px"></i><i style="left:135.99px"></i></div>
<div class="t pct" style="left:619px;top:221px">40%</div>
<div class="dt" style="left:747px;top:217px">The quick brown fox jumps over the<br>lazy dog. The quick brown fox jumps<br>over the lazy dog</div>
<div class="a" style="left:177px;top:272px;width:221px;height:72px;background:#70AD47"></div>
<div class="a" style="left:398px;top:272px;width:332px;height:72px;background:#FFFFFF"></div>
<div class="a" style="left:730px;top:272px;width:220px;height:72px;background:#70AD47"></div>
<div class="t lbl" style="left:190px;top:292px">02</div>
<div class="a" style="left:235.8px;top:294px;width:2.6px;height:28px;background:#fff"></div>
<div class="t lbl tx" style="left:244.7px;top:292px">Text Here</div>
<div class="dots" style="left:408px;top:304px"><i style="left:0.00px"></i><i style="left:15.11px"></i><i style="left:30.22px"></i><i style="left:45.33px"></i><i style="left:60.44px"></i><i style="left:75.55px"></i><i style="left:90.66px"></i><i style="left:105.77px"></i><i style="left:120.88px"></i><i style="left:135.99px"></i></div>
<div class="t pct" style="left:619px;top:291px">60%</div>
<div class="dt" style="left:747px;top:287px">The quick brown fox jumps over the<br>lazy dog. The quick brown fox jumps<br>over the lazy dog</div>
<div class="a" style="left:177px;top:344px;width:221px;height:73px;background:#6BADB9"></div>
<div class="a" style="left:398px;top:344px;width:332px;height:73px;background:#F2F2F2"></div>
<div class="a" style="left:730px;top:344px;width:220px;height:73px;background:#6BADB9"></div>
<div class="t lbl" style="left:190px;top:365px">03</div>
<div class="a" style="left:235.8px;top:366px;width:2.6px;height:28px;background:#fff"></div>
<div class="t lbl tx" style="left:244.7px;top:365px">Text Here</div>
<div class="dots" style="left:408px;top:376px"><i style="left:0.00px"></i><i style="left:15.11px"></i><i style="left:30.22px"></i><i style="left:45.33px"></i><i style="left:60.44px"></i><i style="left:75.55px"></i><i style="left:90.66px"></i><i style="left:105.77px"></i><i style="left:120.88px"></i><i style="left:135.99px"></i></div>
<div class="t pct" style="left:619px;top:367px">70%</div>
<div class="dt" style="left:747px;top:360px">The quick brown fox jumps over the<br>lazy dog. The quick brown fox jumps<br>over the lazy dog</div>
<div class="a" style="left:177px;top:417px;width:221px;height:72px;background:#EE8096"></div>
<div class="a" style="left:398px;top:417px;width:332px;height:72px;background:#FFFFFF"></div>
<div class="a" style="left:730px;top:417px;width:220px;height:72px;background:#EE8096"></div>
<div class="t lbl" style="left:190px;top:440px">04</div>
<div class="a" style="left:235.8px;top:441px;width:2.6px;height:28px;background:#fff"></div>
<div class="t lbl tx" style="left:244.7px;top:440px">Text Here</div>
<div class="dots" style="left:408px;top:448px"><i style="left:0.00px"></i><i style="left:15.11px"></i><i style="left:30.22px"></i><i style="left:45.33px"></i><i style="left:60.44px"></i><i style="left:75.55px"></i><i style="left:90.66px"></i><i style="left:105.77px"></i><i style="left:120.88px"></i><i style="left:135.99px"></i></div>
<div class="t pct" style="left:619px;top:438px">80%</div>
<div class="dt" style="left:747px;top:434px">The quick brown fox jumps over the<br>lazy dog. The quick brown fox jumps<br>over the lazy dog</div>
<div class="a" style="left:177px;top:489px;width:221px;height:72px;background:#FF9F76"></div>
<div class="a" style="left:398px;top:489px;width:332px;height:72px;background:#F2F2F2"></div>
<div class="a" style="left:730px;top:489px;width:220px;height:72px;background:#FF9F76"></div>
<div class="t lbl" style="left:190px;top:510px">05</div>
<div class="a" style="left:235.8px;top:511px;width:2.6px;height:28px;background:#fff"></div>
<div class="t lbl tx" style="left:244.7px;top:510px">Text Here</div>
<div class="dots" style="left:408px;top:520px"><i style="left:0.00px"></i><i style="left:15.11px"></i><i style="left:30.22px"></i><i style="left:45.33px"></i><i style="left:60.44px"></i><i style="left:75.55px"></i><i style="left:90.66px"></i><i style="left:105.77px"></i><i style="left:120.88px"></i><i style="left:135.99px"></i></div>
<div class="t pct" style="left:619px;top:509px">90%</div>
<div class="dt" style="left:747px;top:506px">The quick brown fox jumps over the<br>lazy dog. The quick brown fox jumps<br>over the lazy dog</div>
<div class="a" style="left:177px;top:561px;width:221px;height:73px;background:#FFCA7B"></div>
<div class="a" style="left:398px;top:561px;width:332px;height:73px;background:#FFFFFF"></div>
<div class="a" style="left:730px;top:561px;width:220px;height:73px;background:#FFCA7B"></div>
<div class="t lbl" style="left:190px;top:581px">06</div>
<div class="a" style="left:235.8px;top:583px;width:2.6px;height:28px;background:#fff"></div>
<div class="t lbl tx" style="left:244.7px;top:581px">Text Here</div>
<div class="dots" style="left:408px;top:593px"><i style="left:0.00px"></i><i style="left:15.11px"></i><i style="left:30.22px"></i><i style="left:45.33px"></i><i style="left:60.44px"></i><i style="left:75.55px"></i><i style="left:90.66px"></i><i style="left:105.77px"></i><i style="left:120.88px"></i><i style="left:135.99px"></i></div>
<div class="t pct" style="left:619px;top:578px">100%</div>
<div class="dt" style="left:747px;top:574px">The quick brown fox jumps over the<br>lazy dog. The quick brown fox jumps<br>over the lazy dog</div>
</body></html>
